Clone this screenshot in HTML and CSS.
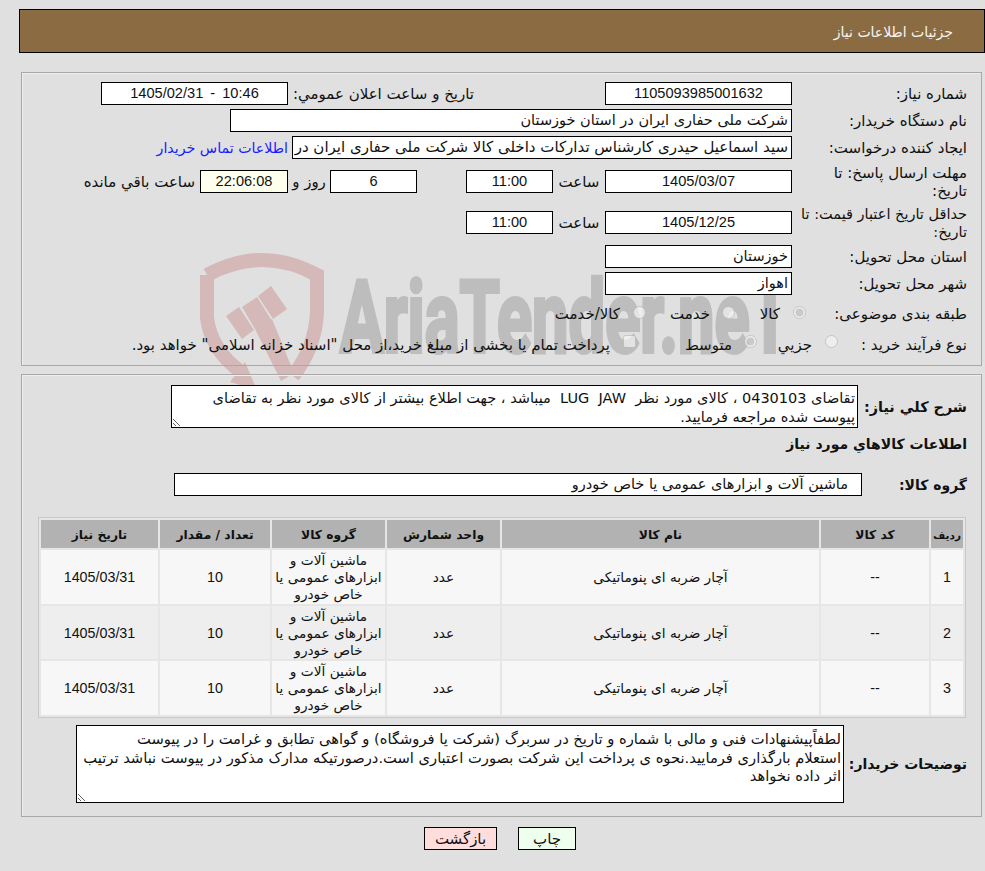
FILE: index.html
```html
<!DOCTYPE html>
<html lang="fa" dir="rtl">
<head>
<meta charset="utf-8">
<title>جزئیات اطلاعات نیاز</title>
<link rel="stylesheet" href="styles.css">
</head>
<body>
<svg class="watermark" viewBox="0 0 640 190" width="640" height="190" aria-hidden="true">
  <path class="wm-shield" d="M14 27 Q69 -3 124 27 L124 65 Q122 100 100 128"/>
  <path class="wm-shield" d="M14 27 L14 70 Q18 102 48 124"/>
  <path class="wm-gavel" d="M52 114 L64 142 L37 134 Z M33 68 L46 59 L61 82 L49 91 Z M49 59 L64 49 L79 73 L62 81 Z M65 48 L78 38 L94 61 L80 71 Z M62 81 L79 71 L101 125 L88 133 Z"/>
  <text class="wm-text" x="147" y="104" textLength="450" lengthAdjust="spacingAndGlyphs">AriaTender.neT</text>
</svg>
<header class="page-title">جزئیات اطلاعات نیاز</header>

<section class="panel panel-info">
  <div class="row">
    <div class="label">شماره نیاز:</div>
    <div class="field w-date num">1105093985001632</div>
    <div class="label-inline">تاریخ و ساعت اعلان عمومي:</div>
    <div class="field w-date num stamp">10:46 - 1405/02/31</div>
  </div>
  <div class="row">
    <div class="label">نام دستگاه خریدار:</div>
    <div class="field w-name text">شرکت ملی حفاری ایران در استان خوزستان</div>
  </div>
  <div class="row">
    <div class="label">ایجاد کننده درخواست:</div>
    <div class="field w-req text">سید اسماعیل حیدری کارشناس تدارکات داخلی کالا شرکت ملی حفاری ایران در استان خوزستان</div>
    <a class="contact" href="#">اطلاعات تماس خریدار</a>
  </div>
  <div class="row row-tall">
    <div class="label">مهلت ارسال پاسخ: تا<br>تاریخ:</div>
    <div class="field w-date num">1405/03/07</div>
    <div class="unit">ساعت</div>
    <div class="field w-small num">11:00</div>
    <div class="field w-small num gap-days">6</div>
    <div class="unit-days">روز و</div>
    <div class="field w-remain num remain">22:06:08</div>
    <div class="unit-remain">ساعت باقي مانده</div>
  </div>
  <div class="row row-tall">
    <div class="label label-tight">حداقل تاریخ اعتبار قیمت: تا<br>تاریخ:</div>
    <div class="field w-date num">1405/12/25</div>
    <div class="unit">ساعت</div>
    <div class="field w-small num">11:00</div>
  </div>
  <div class="row">
    <div class="label">استان محل تحویل:</div>
    <div class="field w-date text">خوزستان</div>
  </div>
  <div class="row">
    <div class="label">شهر محل تحویل:</div>
    <div class="field w-date text">اهواز</div>
  </div>
  <div class="row row-radio">
    <div class="label label-radio">طبقه بندی موضوعی:</div>
    <label class="opt opt-a"><input type="radio" name="cat" checked disabled><span>کالا</span></label>
    <label class="opt opt-b"><input type="radio" name="cat" disabled><span>خدمت</span></label>
    <label class="opt opt-c"><input type="radio" name="cat" disabled><span>کالا/خدمت</span></label>
  </div>
  <div class="row row-process">
    <div class="label label-process">نوع فرآیند خرید :</div>
    <label class="opt opt-d"><input type="radio" name="proc" disabled><span>جزیي</span></label>
    <label class="opt opt-e"><input type="radio" name="proc" checked disabled><span>متوسط</span></label>
    <label class="opt opt-f"><input type="checkbox" disabled><span>پرداخت تمام یا بخشی از مبلغ خرید،از محل "اسناد خزانه اسلامی" خواهد بود.</span></label>
  </div>
</section>

<section class="panel panel-items">
  <div class="row-desc">
    <div class="label-bold">شرح كلي نياز:</div>
    <textarea class="area area-desc" readonly>تقاضای 0430103 ، کالای مورد نظر  LUG  JAW  میباشد ، جهت اطلاع بیشتر از کالای مورد نظر به تقاضای پیوست شده مراجعه فرمایید.</textarea>
  </div>
  <div class="items-title">اطلاعات كالاهاي مورد نياز</div>
  <div class="row-group">
    <div class="label-bold">گروه کالا:</div>
    <div class="field group-field text">ماشین آلات و ابزارهای عمومی یا خاص خودرو</div>
  </div>
  <table class="items">
    <colgroup>
      <col class="c1"><col class="c2"><col class="c3"><col class="c4"><col class="c5"><col class="c6"><col class="c7">
    </colgroup>
    <thead>
      <tr><th class="th-narrow">ردیف</th><th>کد کالا</th><th>نام کالا</th><th>واحد شمارش</th><th>گروه کالا</th><th>تعداد / مقدار</th><th>تاریخ نیاز</th></tr>
    </thead>
    <tbody>
      <tr><td class="num">1</td><td class="num">--</td><td>آچار ضربه ای پنوماتیکی</td><td>عدد</td><td>ماشین آلات و ابزارهای عمومی یا خاص خودرو</td><td class="num">10</td><td class="num">1405/03/31</td></tr>
      <tr><td class="num">2</td><td class="num">--</td><td>آچار ضربه ای پنوماتیکی</td><td>عدد</td><td>ماشین آلات و ابزارهای عمومی یا خاص خودرو</td><td class="num">10</td><td class="num">1405/03/31</td></tr>
      <tr><td class="num">3</td><td class="num">--</td><td>آچار ضربه ای پنوماتیکی</td><td>عدد</td><td>ماشین آلات و ابزارهای عمومی یا خاص خودرو</td><td class="num">10</td><td class="num">1405/03/31</td></tr>
    </tbody>
  </table>
  <div class="row-notes">
    <div class="label-bold">توضیحات خریدار:</div>
    <textarea class="area area-notes" readonly>لطفاًپیشنهادات فنی و مالی با شماره و تاریخ در سربرگ (شرکت یا فروشگاه) و گواهی تطابق و غرامت را در پیوست
استعلام بارگذاری فرمایید.نحوه ی پرداخت این شرکت بصورت اعتباری است.درصورتیکه مدارک مذکور در پیوست نباشد ترتیب
اثر داده نخواهد</textarea>
  </div>
</section>

<div class="actions">
  <button class="btn btn-print" type="button">چاپ</button>
  <button class="btn btn-back" type="button">بازگشت</button>
</div>
</body>
</html>
```
FILE: styles.css
```css
* { box-sizing: border-box; }
html, body { margin: 0; height: 100%; }
body {
  position: relative;
  background: #e0e0e0;
  color: #111;
  font-family: "DejaVu Sans", sans-serif;
  font-size: 15px;
  line-height: 18px;
  padding-top: 9px;
  overflow: hidden;
}
.watermark { position: absolute; left: 193px; top: 248px; z-index: 0; direction: ltr; }
.wm-shield { fill: none; stroke: #d5b8b8; stroke-width: 14; }
.wm-gavel { fill: #d5b8b8; }
.wm-text { fill: #bdbdbd; stroke: #bdbdbd; stroke-width: 4; font-family: "Roboto", sans-serif; font-weight: 700; font-size: 100px; direction: ltr; }
.page-title {
  position: relative;
  width: 966px;
  height: 44px;
  background: #8b6b42;
  border: 1px solid #000;
  color: #f4f4f4;
  padding: 13px 31px 0 0;
  font-size: 14px;
}
.panel {
  position: relative;
  z-index: 1;
  width: 961px;
  margin-inline-start: 3px;
  border: 1px solid #a8a8a8;
  box-shadow: inset 1px 1px 0 #eee;
}
.panel-info {
  margin-top: 19px;
  height: 294px;
  padding: 9px 14px 0 0;
  display: flex;
  flex-direction: column;
  gap: 4px;
}
.row { display: flex; align-items: center; height: 23px; flex: none; }
.row-tall { height: 37px; }
.row-radio { height: 30px; }
.label { width: 175px; flex: none; white-space: nowrap; }
.label-tight { font-size: 14.5px; }
.label-radio { width: 161px; }
.label-process { width: 129px; }
.field {
  height: 23px;
  background: #fff;
  border: 1px solid #000;
  white-space: nowrap;
  overflow: hidden;
  line-height: 21px;
  flex: none;
}
.num { font-family: "Liberation Sans", sans-serif; font-size: 14.6px; text-align: center; }
.stamp { word-spacing: 3px; }
.text { padding: 0 3px; font-size: 14.5px; }
.w-date { width: 187px; }
.w-name { width: 562px; }
.w-req { width: 500px; font-size: 15px; }
.w-small { width: 87px; }
.w-remain { width: 88px; }
.label-inline { width: 317px; flex: none; padding-right: 131px; white-space: nowrap; }
.contact { color: #1a1aff; text-decoration: none; margin-right: 4px; white-space: nowrap; font-size: 14.2px; }
.unit { width: 52px; flex: none; text-align: center; }
.gap-days { margin-right: 49px; }
.unit-days { width: 42px; flex: none; text-align: center; }
.remain { background: #ffffee; }
.unit-remain { margin-right: 5px; white-space: nowrap; }
.opt { display: flex; align-items: center; flex: none; white-space: nowrap; }
.opt input { margin: 0; width: 13px; height: 13px; flex: none; position: relative; top: -2px; }
.row-process .opt input { top: -3px; }
.opt-a span { margin-right: 13px; width: 20px; }
.opt-b { margin-right: 25px; }
.opt-b span { margin-right: 12px; width: 40px; }
.opt-c { margin-right: 24px; }
.opt-c span { margin-right: 13px; }
.opt-d span { margin-right: 13px; width: 34px; }
.opt-e { margin-right: 21px; }
.opt-e span { margin-right: 12px; width: 45px; }
.opt-f { margin-right: 51px; }
.opt-f span { margin-right: 13px; }
.panel-items {
  margin-top: 8px;
  height: 443px;
  padding: 10px 14px 0 15px;
}
.label-bold { font-weight: 700; font-size: 14px; white-space: nowrap; flex: none; }
.row-desc { display: flex; align-items: center; height: 43px; }
.row-desc .label-bold { width: 109px; font-size: 14.4px; }
.area {
  display: block;
  background: #fff;
  border: 1px solid #000;
  border-radius: 0;
  padding: 3px 2px 0 2px;
  margin: 0;
  color: #111;
  font: inherit;
  font-size: 14.5px;
  line-height: 18.5px;
  outline: none;
  overflow: hidden;
}
.area-desc { width: 687px; height: 43px; resize: both; }
.items-title { font-weight: 700; font-size: 14px; margin-top: 7px; height: 17px; }
.row-group { display: flex; align-items: center; height: 23px; margin-top: 21px; }
.row-group .label-bold { width: 105px; }
.group-field { width: 688px; padding-right: 13px; }
.items {
  width: 928px;
  margin-top: 21px;
  margin-right: 1px;
  border-collapse: separate;
  border-spacing: 2px;
  border: 1px solid #c8c8c8;
  background: #e6e6e6;
  table-layout: fixed;
  text-align: center;
}
.c1 { width: 32px; } .c2 { width: 108px; } .c3 { width: 317px; } .c4 { width: 113px; } .c5 { width: 113px; } .c6 { width: 110px; } .c7 { width: 117px; }
.items th { background: #b2b2b2; height: 28px; padding: 1px 0 0; font-size: 12.3px; font-weight: 700; }
.items th.th-narrow { font-size: 10.5px; }
.items td { height: 53.6px; padding: 2px 2px 0; font-size: 13.7px; line-height: 17px; }
.items td.num { font-size: 14.3px; }
.items tbody tr:nth-child(odd) td { background: #f7f7f7; }
.items tbody tr:nth-child(even) td { background: #eeeeee; }
.row-notes { display: flex; align-items: center; margin-top: 8px; height: 77px; }
.row-notes .label-bold { width: 123px; }
.area-notes { width: 768px; height: 78px; padding-top: 4px; font-size: 14.7px; resize: both; }
.actions {
  position: relative;
  z-index: 1;
  display: flex;
  gap: 21px;
  margin-top: 10px;
  padding-right: 409px;
}
.btn {
  height: 23px;
  padding: 0;
  border: 1px solid #000;
  color: #111;
  font: inherit;
}
.btn-print { width: 58px; background: #eeffee; }
.btn-back { width: 73px; background: #ffdddd; }
```
